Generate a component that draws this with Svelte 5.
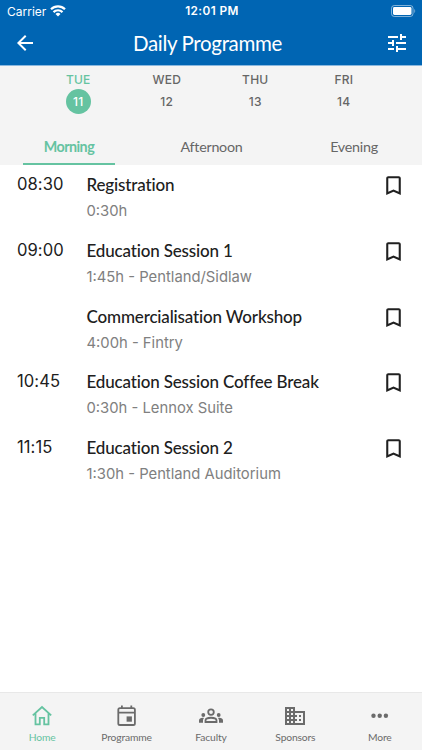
<script lang="ts">
    const days = [
        { name: "TUE", date: 11 },
        { name: "WED", date: 12 },
        { name: "THU", date: 13 },
        { name: "FRI", date: 14 },
    ];
    const periods = ["Morning", "Afternoon", "Evening"];
    const sessions = [
        { time: "08:30", title: "Registration", detail: "0:30h" },
        { time: "09:00", title: "Education Session 1", detail: "1:45h - Pentland/Sidlaw" },
        { time: "", title: "Commercialisation Workshop", detail: "4:00h - Fintry" },
        { time: "10:45", title: "Education Session Coffee Break", detail: "0:30h - Lennox Suite" },
        { time: "11:15", title: "Education Session 2", detail: "1:30h - Pentland Auditorium" },
    ];
    const navItems = ["Home", "Programme", "Faculty", "Sponsors", "More"];

    let activeDay = $state(11);
    let activePeriod = $state("Morning");
    let activeNav = $state("Home");
</script>

{#snippet navIcon(name: string)}
    <svg viewBox="0 0 24 24">
        {#if name === "Home"}
            <path class="line" d="M2.8 11.3 12 3l9.2 8.3M5.5 9.5v10.8h4.3v-6.5h4.4v6.5h4.3V9.5" />
        {:else if name === "Programme"}
            <rect class="line" x="3.3" y="4.2" width="16.6" height="16.8" rx="1.6" />
            <path class="line" d="M3.3 8.7h16.6M6.9 1.4v3M16.3 1.4v3" />
            <path d="M11.6 12.4h5.3v5.3h-5.3z" />
        {:else if name === "Faculty"}
            <circle class="line" cx="12" cy="8.1" r="2.8" />
            <path class="line" d="M6.5 18v-1.4c0-3.8 11-3.8 11 0V18z" />
            <circle cx="4.3" cy="11" r="1.9" />
            <circle cx="19.7" cy="11" r="1.9" />
            <path d="M0 18.8v-2.3c0-2 2.4-3 5-2.5-.7.8-1 1.6-1 2.5v2.3zM24 18.8v-2.3c0-2-2.4-3-5-2.5.7.8 1 1.6 1 2.5v2.3z" />
        {:else if name === "Sponsors"}
            <path d="M12 7V3H2v18h20V7H12zM6 19H4v-2h2v2zm0-4H4v-2h2v2zm0-4H4V9h2v2zm0-4H4V5h2v2zm4 12H8v-2h2v2zm0-4H8v-2h2v2zm0-4H8V9h2v2zm0-4H8V5h2v2zm10 12h-8v-2h2v-2h-2v-2h2v-2h-2V9h8v10zm-2-8h-2v2h2v-2zm0 4h-2v2h2v-2z" />
        {:else}
            <circle cx="5.5" cy="11.8" r="2.2" />
            <circle cx="11.7" cy="11.8" r="2.2" />
            <circle cx="17.9" cy="11.8" r="2.2" />
        {/if}
    </svg>
{/snippet}

<div class="app">
    <header>
        <div class="status">
            <div class="carrier">
                <span>Carrier</span>
                <svg width="16" height="12" viewBox="0 0 16 12" fill="none" stroke="currentColor" stroke-width="2.2">
                    <path d="M1 4.3a10 10 0 0 1 14 0M3.5 7.1a6.4 6.4 0 0 1 9 0" />
                    <path d="M5.5 9a3.6 3.6 0 0 1 5 0L8 11.5z" fill="currentColor" stroke="none" />
                </svg>
            </div>
            <span class="clock">12:01 PM</span>
            <div class="battery">
                <svg width="26" height="12" viewBox="0 0 26 12">
                    <rect x=".5" y=".5" width="21.5" height="11" rx="2.8" fill="none" stroke="#fff" stroke-opacity=".5" />
                    <rect x="2" y="2" width="18.5" height="8" rx="1.4" fill="#fff" />
                    <path d="M23.3 4v4c1.2-.5 1.2-3.5 0-4z" fill="#fff" fill-opacity=".5" />
                </svg>
            </div>
        </div>
        <div class="toolbar">
            <button aria-label="Back">
                <svg viewBox="0 0 24 24"><path d="M20 11H7.83l5.59-5.59L12 4l-8 8 8 8 1.41-1.41L7.83 13H20v-2z" /></svg>
            </button>
            <h1>Daily Programme</h1>
            <button aria-label="Filter">
                <svg viewBox="0 0 24 24"><path d="M3 17v2h6v-2H3zM3 5v2h10V5H3zm10 16v-2h8v-2h-8v-2h-2v6h2zM7 9v2H3v2h4v2h2V9H7zm14 4v-2H11v2h10zm-6-4h2V7h4V5h-4V3h-2v6z" /></svg>
            </button>
        </div>
    </header>

    <section class="filters">
        <div class="days">
            {#each days as day}
                <button class="day" class:active={day.date === activeDay} onclick={() => (activeDay = day.date)}>
                    <span class="day-name">{day.name}</span>
                    <span class="day-date">{day.date}</span>
                </button>
            {/each}
        </div>
        <div class="periods">
            {#each periods as period}
                <button class="period" class:active={period === activePeriod} onclick={() => (activePeriod = period)}>
                    {period}
                </button>
            {/each}
        </div>
    </section>

    <main>
        {#each sessions as session}
            <article class="session">
                <time>{session.time}</time>
                <div class="copy">
                    <h2>{session.title}</h2>
                    <p>{session.detail}</p>
                </div>
                <button class="bookmark" aria-label="Bookmark">
                    <svg viewBox="0 0 24 24"><path d="M17 3H7c-1.1 0-1.99.9-1.99 2L5 21l7-3 7 3V5c0-1.1-.9-2-2-2zm0 15-5-2.18L7 18V5h10v13z" /></svg>
                </button>
            </article>
        {/each}
    </main>

    <nav>
        {#each navItems as item}
            <button class="nav-item" class:active={item === activeNav} onclick={() => (activeNav = item)}>
                {@render navIcon(item)}
                <span>{item}</span>
            </button>
        {/each}
    </nav>
</div>

<style>
    :global(body) {
        margin: 0;
    }

    .app {
        --accent: #65c3a1;
        display: flex;
        flex-direction: column;
        height: 750px;
        overflow: hidden;
        background: #fff;
        font-family: Inter, "Liberation Sans", sans-serif;
        color: #202020;
    }

    button {
        padding: 0;
        border: 0;
        background: none;
        color: inherit;
        font: inherit;
    }

    svg {
        display: block;
        flex-shrink: 0;
        fill: currentColor;
    }

    .line {
        fill: none;
        stroke: currentColor;
        stroke-width: 1.8;
    }

    header {
        height: 66px;
        border-bottom: 1px solid #8ab8df;
        box-sizing: border-box;
        background: #0065b3;
        color: #fff;
    }

    .status {
        display: grid;
        grid-template-columns: 1fr auto 1fr;
        align-items: center;
        height: 22px;
        padding: 0 5px 0 7px;
        font-size: 12px;
    }

    .carrier {
        display: flex;
        align-items: center;
        gap: 4px;
    }

    .carrier svg {
        fill: none;
    }

    .clock {
        font-weight: 600;
        font-size: 11.8px;
        letter-spacing: 0.4px;
    }

    .battery {
        justify-self: end;
    }

    .toolbar {
        display: flex;
        align-items: center;
        justify-content: space-between;
        height: 42px;
        padding: 0 13px;
    }

    .toolbar svg {
        width: 24px;
        height: 24px;
    }

    h1 {
        margin: 0 7px 0 0;
        font: 400 20.5px/28px Lato, sans-serif;
        letter-spacing: -0.33px;
    }

    .filters {
        display: flex;
        flex-direction: column;
        height: 99px;
        background: #f4f4f4;
        color: #666;
    }

    .days {
        display: grid;
        grid-template-columns: repeat(4, 1fr);
        padding: 6px 34px 0;
    }

    .day {
        display: flex;
        flex-direction: column;
        align-items: center;
        gap: 2px;
        font-size: 12px;
        font-weight: 500;
    }

    .day-name {
        line-height: 15px;
        letter-spacing: 0.2px;
    }

    .day-date {
        width: 25px;
        height: 25px;
        border-radius: 50%;
        line-height: 25px;
        text-align: center;
        letter-spacing: 0.2px;
        font-kerning: none;
    }

    .active {
        color: var(--accent);
    }

    .day.active .day-date {
        background: var(--accent);
        color: #fff;
    }

    .periods {
        display: flex;
        justify-content: space-between;
        margin-top: auto;
        padding: 0 22px 0 23px;
    }

    .period {
        width: 92px;
        height: 39px;
        padding-top: 2px;
        border-bottom: 2px solid transparent;
        font: 400 14.3px/37px Lato, sans-serif;
        letter-spacing: -0.25px;
    }

    .period.active {
        border-color: var(--accent);
        font-weight: 700;
        letter-spacing: -0.55px;
    }

    main {
        flex: 1;
    }

    .session {
        display: grid;
        grid-template-columns: 69.5px 1fr 25px;
        align-items: start;
        height: 65.8px;
        padding: 8px 16.5px 0 17px;
        box-sizing: border-box;
    }

    time {
        font-size: 16.6px;
        line-height: 23px;
        letter-spacing: 0.05px;
        font-kerning: none;
        font-feature-settings: "calt" 0;
    }

    h2 {
        margin: 0;
        font: 500 17px/24px Lato, sans-serif;
        letter-spacing: -0.16px;
        white-space: nowrap;
    }

    p {
        margin: 3px 0 0;
        color: #808080;
        font-size: 14.8px;
        line-height: 22px;
    }

    .bookmark svg {
        width: 25px;
        height: 25px;
    }

    nav {
        display: grid;
        grid-template-columns: repeat(5, 1fr);
        height: 58px;
        border-top: 1px solid #e8e8e8;
        box-sizing: border-box;
        background: #f4f4f4;
        color: #6b6b6b;
    }

    .nav-item {
        display: flex;
        flex-direction: column;
        align-items: center;
        padding-top: 11px;
        font: 400 10.3px/14px Lato, sans-serif;
        letter-spacing: -0.15px;
    }

    .nav-item.active {
        color: var(--accent);
    }

    .nav-item svg {
        width: 24px;
        height: 24px;
        margin-bottom: 2px;
    }
</style>
